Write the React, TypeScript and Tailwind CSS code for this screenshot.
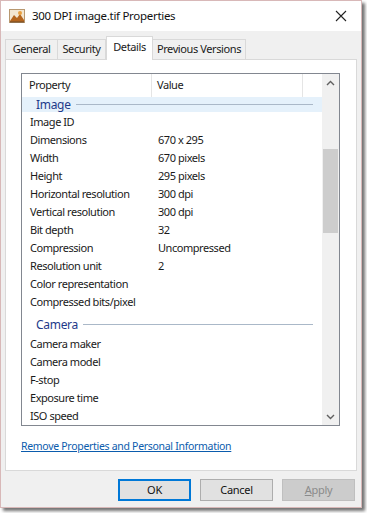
import React from "react";

const font = { fontFamily: '"Segoe UI", "Noto Sans", "Liberation Sans", sans-serif' };

const imageRows: [string, string][] = [
  ["Image ID", ""],
  ["Dimensions", "670 x 295"],
  ["Width", "670 pixels"],
  ["Height", "295 pixels"],
  ["Horizontal resolution", "300 dpi"],
  ["Vertical resolution", "300 dpi"],
  ["Bit depth", "32"],
  ["Compression", "Uncompressed"],
  ["Resolution unit", "2"],
  ["Color representation", ""],
  ["Compressed bits/pixel", ""],
];
const cameraRows: [string, string][] = [
  ["Camera maker", ""],
  ["Camera model", ""],
  ["F-stop", ""],
  ["Exposure time", ""],
  ["ISO speed", ""],
];

function Row({ p, v }: { p: string; v: string }) {
  return (
    <div className="flex h-[18px] items-center text-[11px] tracking-[-0.45px] text-[#1a1a1a]">
      <div className="w-[130px] pl-[8px] whitespace-nowrap">{p}</div>
      <div className="pl-[6px] whitespace-nowrap">{v}</div>
    </div>
  );
}

function Group({ label, highlight }: { label: string; highlight?: boolean }) {
  return (
    <div className={`flex h-[15px] items-center pl-[14px] pr-[9px] ${highlight ? "bg-[#e5f1fb]" : ""}`}>
      <span className="text-[12px] leading-none tracking-[-0.3px] text-[#1e3a8a]">{label}</span>
      <div className="ml-[5px] h-px flex-1 bg-[#aab8c8]" />
    </div>
  );
}

function FileIcon() {
  return (
    <svg width="16" height="14" viewBox="0 0 16 14">
      <rect x="0.5" y="0.5" width="15" height="13" fill="#f3e6d0" stroke="#b89870" />
      <path d="M1 12 L5 6 L8 9 L11 5 L15 11 L15 13 L1 13 Z" fill="#b5651d" />
      <circle cx="11" cy="4" r="2" fill="#e8a040" />
      <path d="M1 13 L15 13" stroke="#6b4a2a" />
    </svg>
  );
}

export default function App() {
  return (
    <div className="relative h-[513px] w-[367px] bg-white" style={font}>
      <div className="flex h-[508px] w-[362px] flex-col border border-[#d8b8b8] bg-[#f0f0f0] shadow-[3px_3px_3px_rgba(0,0,0,0.55)]">
        {/* Title bar */}
        <div className="flex h-[30px] items-center bg-white">
          <div className="ml-[8px] mr-[7px] flex items-center">
            <FileIcon />
          </div>
          <span className="text-[11.5px] tracking-[-0.3px] text-[#111]">300 DPI image.tif Properties</span>
          <div className="ml-auto mr-[10px] flex h-[20px] w-[20px] items-center justify-center">
            <svg width="12" height="12" viewBox="0 0 12 12">
              <path d="M1 1 L11 11 M11 1 L1 11" stroke="#222" strokeWidth="1.1" />
            </svg>
          </div>
        </div>

        {/* Body */}
        <div className="flex flex-1 flex-col px-[4px]">
          {/* Tabs */}
          <div className="mt-[4px] flex h-[24px] items-end text-[11px] tracking-[-0.4px] text-[#1a1a1a]">
            <div className="flex h-[20px] w-[53px] items-center justify-center border border-b-0 border-[#d9d9d9]">General</div>
            <div className="flex h-[20px] w-[48px] items-center justify-center border border-b-0 border-l-0 border-[#d9d9d9]">Security</div>
            <div className="relative z-10 -mb-px flex h-[24px] w-[47px] items-center justify-center border border-b-0 border-[#d9d9d9] bg-white pb-[3px]">Details</div>
            <div className="flex h-[20px] w-[93px] items-center justify-center border border-b-0 border-l-0 border-[#d9d9d9]">Previous Versions</div>
          </div>

          {/* Panel */}
          <div className="flex h-[412px] w-[352px] flex-col border border-[#d9d9d9] bg-white">
            <div className="ml-[15px] mt-[13px] flex h-[353px] w-[319px] border border-[#828790] bg-white">
              <div className="flex flex-1 flex-col overflow-hidden">
                {/* Header */}
                <div className="flex h-[23px] items-center text-[11px] tracking-[-0.45px] text-[#1a1a1a]">
                  <div className="flex h-full w-[130px] items-center border-r border-[#e5e5e5] pl-[7px]">Property</div>
                  <div className="flex h-full w-[151px] items-center border-r border-[#e5e5e5] pl-[5px]">Value</div>
                  <div className="flex-1" />
                </div>
                <Group label="Image" highlight />
                <div className="h-[1px]" />
                {imageRows.map(([p, v]) => (
                  <Row key={p} p={p} v={v} />
                ))}
                <div className="h-[6px]" />
                <Group label="Camera" />
                <div className="h-[3px]" />
                {cameraRows.map(([p, v]) => (
                  <Row key={p} p={p} v={v} />
                ))}
              </div>
              {/* Scrollbar */}
              <div className="flex w-[17px] flex-col bg-[#f0f0f0]">
                <div className="flex h-[17px] items-center justify-center">
                  <svg width="9" height="6" viewBox="0 0 9 6">
                    <path d="M1 5 L4.5 1.5 L8 5" stroke="#606060" strokeWidth="1.4" fill="none" />
                  </svg>
                </div>
                <div className="h-[58px]" />
                <div className="mx-[1px] h-[84px] bg-[#cdcdcd]" />
                <div className="flex-1" />
                <div className="flex h-[17px] items-center justify-center">
                  <svg width="9" height="6" viewBox="0 0 9 6">
                    <path d="M1 1 L4.5 4.5 L8 1" stroke="#606060" strokeWidth="1.4" fill="none" />
                  </svg>
                </div>
              </div>
            </div>
            <div className="ml-[15px] mt-[13px] text-[10.5px] tracking-[-0.3px] text-[#0b5cad] underline decoration-[#0b5cad]">
              Remove Properties and Personal Information
            </div>
          </div>

          {/* Buttons */}
          <div className="mt-[8px] flex justify-end gap-[9px] pr-[2px] text-[11px] tracking-[-0.3px]">
            <div className="flex h-[22px] w-[73px] items-center justify-center border-2 border-[#0078d7] bg-[#e1e1e1] text-[#111]">OK</div>
            <div className="flex h-[22px] w-[73px] items-center justify-center border border-[#adadad] bg-[#e1e1e1] text-[#111]">Cancel</div>
            <div className="flex h-[22px] w-[73px] items-center justify-center border border-[#bfbfbf] bg-[#cccccc] text-[#8a8a8a]">
              <span><span className="underline">A</span>pply</span>
            </div>
          </div>
        </div>
      </div>
    </div>
  );
}
